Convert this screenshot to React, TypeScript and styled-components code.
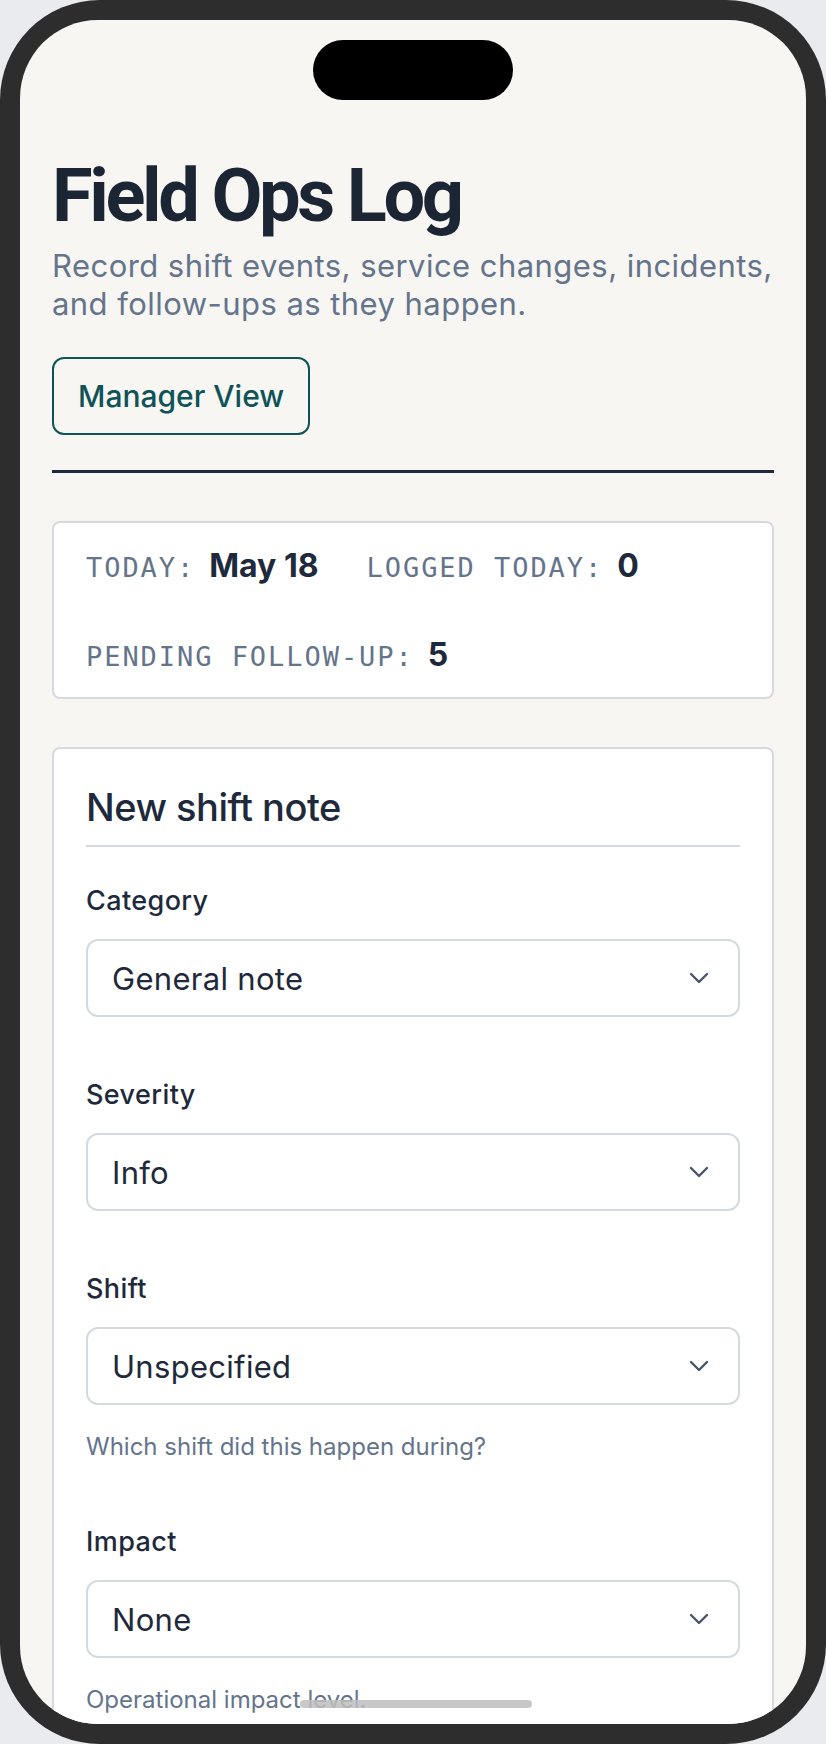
import React from "react";
import styled, { createGlobalStyle } from "styled-components";

const Global = createGlobalStyle`
  html, body { margin: 0; padding: 0; }
  body {
    background: #e9ebee;
    font-family: Inter, "Noto Sans", sans-serif;
  }
  * { box-sizing: border-box; }
`;

const Phone = styled.div`
  width: 826px;
  height: 1744px;
  border-radius: 100px;
  background: #2d2d2d;
  padding: 20px;
`;

const Screen = styled.div`
  position: relative;
  width: 100%;
  height: 100%;
  border-radius: 78px;
  background: #f7f6f3;
  overflow: hidden;
`;

const Island = styled.div`
  position: absolute;
  top: 20px;
  left: 50%;
  width: 200px;
  height: 60px;
  margin-left: -100px;
  border-radius: 30px;
  background: #000;
  z-index: 2;
`;

const HomeBar = styled.div`
  position: absolute;
  bottom: 16px;
  left: 50%;
  width: 232px;
  height: 8px;
  margin-left: -113px;
  border-radius: 4px;
  background: rgba(190, 190, 190, 0.85);
  z-index: 2;
`;

const Content = styled.main`
  display: flex;
  flex-direction: column;
  gap: 48px;
  padding: 136px 32px 0;
`;

const Header = styled.header`
  display: flex;
  flex-direction: column;
  align-items: flex-start;
  padding-bottom: 35px;
  border-bottom: 3px solid #1e293b;
`;

const Title = styled.h1`
  margin: 0;
  font-family: Roboto, "Noto Sans", sans-serif;
  font-weight: 700;
  font-size: 74px;
  line-height: 80px;
  letter-spacing: -3.4px;
  color: #1b2533;
`;

const Subtitle = styled.p`
  margin: 11px 0 0;
  font-size: 31px;
  line-height: 38px;
  letter-spacing: 0.45px;
  color: #64748b;
`;

const OutlineButton = styled.button`
  margin-top: 34px;
  height: 78px;
  padding: 0 24px;
  border: 2px solid #0f5257;
  border-radius: 12px;
  background: transparent;
  font-family: Inter, sans-serif;
  font-weight: 500;
  font-size: 30px;
  color: #0f5257;
  cursor: pointer;
`;

const Card = styled.section<{ $pad?: string }>`
  background: #fff;
  border: 2px solid #d5dae0;
  border-radius: 8px;
  padding: ${(p) => p.$pad || "32px"};
`;

const StatRow = styled.div`
  display: flex;
  flex-wrap: wrap;
  column-gap: 48px;
  row-gap: 51px;
`;

const Stat = styled.div`
  display: flex;
  align-items: baseline;
  gap: 14px;
  line-height: 36px;
`;

const StatLabel = styled.span`
  font-family: "DejaVu Sans Mono", "Liberation Mono", monospace;
  font-size: 27px;
  letter-spacing: 1.95px;
  text-transform: uppercase;
  color: #64748b;
`;

const StatValue = styled.span`
  font-family: Inter, sans-serif;
  font-weight: 700;
  font-size: 32px;
  color: #1e293b;
`;

const FormHeader = styled.div`
  padding-bottom: 11px;
  border-bottom: 2px solid #d5dae0;
  margin-bottom: 36px;
`;

const FormTitle = styled.h2`
  margin: 0;
  font-family: Inter, sans-serif;
  font-weight: 500;
  font-size: 38px;
  line-height: 53px;
  letter-spacing: -0.5px;
  color: #1e293b;
`;

const Fields = styled.div`
  display: flex;
  flex-direction: column;
  gap: 60px;
`;

const Field = styled.div`
  display: flex;
  flex-direction: column;
`;

const Label = styled.label`
  font-family: Inter, sans-serif;
  font-weight: 500;
  font-size: 27px;
  line-height: 36px;
  letter-spacing: 0.4px;
  color: #1e293b;
  margin-bottom: 20px;
`;

const SelectWrap = styled.div`
  position: relative;
`;

const Select = styled.select`
  appearance: none;
  -webkit-appearance: none;
  width: 100%;
  height: 78px;
  padding: 0 64px 0 24px;
  border: 2px solid #d5dae0;
  border-radius: 12px;
  background: #fff;
  font-family: Inter, sans-serif;
  font-size: 31px;
  letter-spacing: 0.3px;
  color: #1e293b;
  outline: none;
`;

const Chevron = styled.svg`
  position: absolute;
  right: 31px;
  top: 50%;
  width: 20px;
  height: 12px;
  margin-top: -6px;
  pointer-events: none;
`;

const Hint = styled.p`
  margin: 25px 0 0;
  font-size: 24px;
  line-height: 34px;
  color: #64748b;
`;

type FieldDef = { id: string; label: string; options: string[]; hint?: string };

const fields: FieldDef[] = [
  { id: "category", label: "Category", options: ["General note", "Service change", "Incident", "Follow-up"] },
  { id: "severity", label: "Severity", options: ["Info", "Warning", "Critical"] },
  {
    id: "shift",
    label: "Shift",
    options: ["Unspecified", "Morning", "Afternoon", "Night"],
    hint: "Which shift did this happen during?",
  },
  {
    id: "impact",
    label: "Impact",
    options: ["None", "Low", "Medium", "High"],
    hint: "Operational impact level.",
  },
];

const stats = [
  { label: "Today:", value: "May 18" },
  { label: "Logged today:", value: "0" },
  { label: "Pending follow-up:", value: "5" },
];

export default function App() {
  return (
    <>
      <Global />
      <Phone>
        <Screen>
          <Island />
          <Content>
            <Header>
              <Title>Field Ops Log</Title>
              <Subtitle>
                Record shift events, service changes, incidents, and follow-ups as they happen.
              </Subtitle>
              <OutlineButton type="button">Manager View</OutlineButton>
            </Header>

            <Card $pad="25px 32px 22px">
              <StatRow>
                {stats.map((s) => (
                  <Stat key={s.label}>
                    <StatLabel>{s.label}</StatLabel>
                    <StatValue>{s.value}</StatValue>
                  </Stat>
                ))}
              </StatRow>
            </Card>

            <Card>
              <FormHeader>
                <FormTitle>New shift note</FormTitle>
              </FormHeader>
              <Fields>
                {fields.map((f) => (
                  <Field key={f.id}>
                    <Label htmlFor={f.id}>{f.label}</Label>
                    <SelectWrap>
                      <Select id={f.id} defaultValue={f.options[0]}>
                        {f.options.map((o) => (
                          <option key={o}>{o}</option>
                        ))}
                      </Select>
                      <Chevron viewBox="0 0 20 12" fill="none">
                        <path
                          d="M2 2l8 8 8-8"
                          stroke="#475569"
                          strokeWidth="2.4"
                          strokeLinecap="round"
                          strokeLinejoin="round"
                        />
                      </Chevron>
                    </SelectWrap>
                    {f.hint && <Hint>{f.hint}</Hint>}
                  </Field>
                ))}
              </Fields>
            </Card>
          </Content>
          <HomeBar />
        </Screen>
      </Phone>
    </>
  );
}
